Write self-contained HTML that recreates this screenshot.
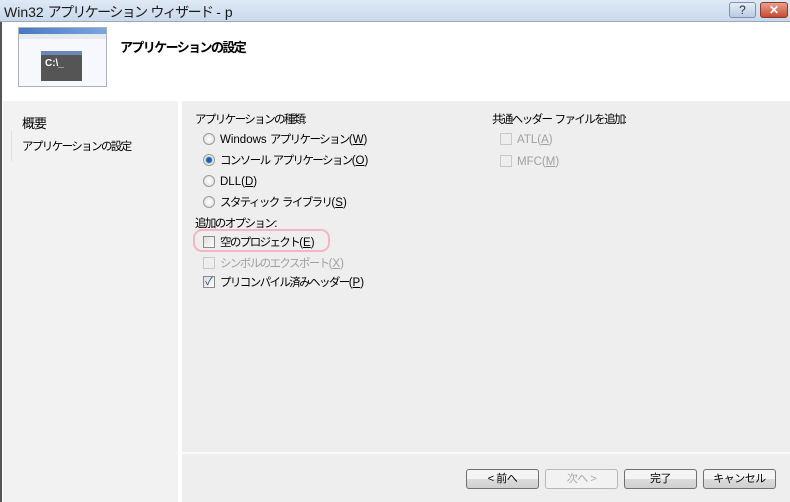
<!DOCTYPE html>
<html><head><meta charset="utf-8"><style>
*{margin:0;padding:0;box-sizing:border-box}
body{width:790px;height:502px;overflow:hidden;background:#fff;font-family:"Liberation Sans","Noto Sans CJK JP",sans-serif;font-size:12px;color:#000;position:relative}
.a{position:absolute}
.title{left:0;top:0;width:790px;height:22px;background:linear-gradient(#dfe9f5,#c9d9ec);border-bottom:1px solid #9aa8b8}
.title>span{position:absolute;left:4px;top:2px;font-size:14px;color:#1b1b1b;letter-spacing:-1.6px;white-space:nowrap}
.btn{border:1px solid #707070;border-radius:3px;background:linear-gradient(#f4f4f4 50%,#dcdcdc 50%,#d0d0d0);text-align:center;font-size:11px;line-height:18px;height:20px;letter-spacing:-0.5px}
.rad{width:12px;height:12px;border-radius:50%;border:1px solid #9a9a9a;background:radial-gradient(#fff,#dcdcdc)}
.chk{width:12px;height:12px;border:1px solid #8a8a8a;background:linear-gradient(135deg,#dcdcdc,#fff)}
.t{font-size:11.5px;white-space:nowrap;letter-spacing:-1.6px;line-height:17px;height:17px;margin-top:2px}
.l{letter-spacing:0}
.g{color:#a0a0a0}
</style></head><body>
<div class="a title"><span><span class="l">Win32 </span>アプリケーション<span class="l"> </span>ウィザード<span class="l"> - p</span></span></div>
<div class="a" style="left:729px;top:2px;width:27px;height:16px;border:1px solid #7f92aa;border-radius:3px;background:linear-gradient(#e4edf7,#b9cbe2);text-align:center;font-size:12px;line-height:14px;color:#333">?</div>
<div class="a" style="left:760px;top:2px;width:28px;height:16px;border:1px solid #8b3a2e;border-radius:3px;background:linear-gradient(#e8a08f,#c84a33);text-align:center;font-size:12px;font-weight:bold;line-height:14px;color:#fff">✕</div>
<div class="a" style="left:0;top:22px;width:2px;height:480px;background:#555"></div>
<div class="a" style="left:18px;top:27px;width:89px;height:60px;border:1px solid #a9b4c2;background:#f6f8fb">
 <div style="height:6px;background:linear-gradient(90deg,#4a78c0,#7aa6e0)"></div>
 <div style="height:5px;background:#e6e9ee"></div>
 <div style="position:absolute;left:22px;top:23px;width:41px;height:30px;background:#555;border-top:4px solid #6a88b8;color:#fff;font-weight:bold;font-size:10px;padding:3px 0 0 4px">C:\_</div>
</div>
<div class="a t" style="left:120px;top:37px;font-weight:bold;font-size:13px;letter-spacing:-1.6px">アプリケーションの設定</div>
<div class="a" style="left:3px;top:101px;width:175px;height:401px;background:#f2f2f2"></div>
<div class="a" style="left:11px;top:131px;width:1px;height:30px;background:#e0e0e0"></div>
<div class="a t" style="left:22px;top:113px;font-size:13px;letter-spacing:-1px">概要</div>
<div class="a t" style="left:22px;top:137px">アプリケーションの設定</div>
<div class="a" style="left:182px;top:101px;width:608px;height:401px;background:#eeeeee"></div>
<div class="a" style="left:182px;top:452px;width:608px;height:2px;background:#fafafa"></div>
<div class="a t" style="left:195px;top:110px">アプリケーションの種類<span class="l">:</span></div>
<div class="a rad" style="left:203px;top:133px"></div><div class="a t" style="left:220px;top:130px"><span class="l">Windows </span>アプリケーション<span class="l">(<u>W</u>)</span></div>
<div class="a rad" style="left:203px;top:154px;background:radial-gradient(#1a5fa8 30%,#7ab 45%,#eee 55%)"></div><div class="a t" style="left:220px;top:151px">コンソール<span class="l"> </span>アプリケーション<span class="l">(<u>O</u>)</span></div>
<div class="a rad" style="left:203px;top:175px"></div><div class="a t" style="left:220px;top:172px"><span class="l">DLL(<u>D</u>)</span></div>
<div class="a rad" style="left:203px;top:196px"></div><div class="a t" style="left:220px;top:193px">スタティック<span class="l"> </span>ライブラリ<span class="l">(<u>S</u>)</span></div>
<div class="a t" style="left:195px;top:214px">追加のオプション<span class="l">:</span></div>
<div class="a" style="left:193px;top:229px;width:137px;height:23px;border:2px solid #f4b6c2;border-radius:9px"></div>
<div class="a chk" style="left:203px;top:236px"></div><div class="a t" style="left:220px;top:233px">空のプロジェクト<span class="l">(<u>E</u>)</span></div>
<div class="a chk" style="left:203px;top:257px;border-color:#c8c8c8;background:#eee"></div><div class="a t g" style="left:220px;top:254px">シンボルのエクスポート<span class="l">(<u>X</u>)</span></div>
<div class="a chk" style="left:203px;top:276px;font-size:11px;line-height:10px;text-align:center;color:#1a4f90">✓</div><div class="a t" style="left:220px;top:273px">プリコンパイル済みヘッダー<span class="l">(<u>P</u>)</span></div>
<div class="a t" style="left:492px;top:110px">共通ヘッダー<span class="l"> </span>ファイルを追加<span class="l">:</span></div>
<div class="a chk" style="left:500px;top:133px;border-color:#c8c8c8;background:#eee"></div><div class="a t g" style="left:517px;top:130px"><span class="l">ATL(<u>A</u>)</span></div>
<div class="a chk" style="left:500px;top:155px;border-color:#c8c8c8;background:#eee"></div><div class="a t g" style="left:517px;top:152px"><span class="l">MFC(<u>M</u>)</span></div>
<div class="a btn" style="left:466px;top:469px;width:73px">&lt; 前へ</div>
<div class="a btn" style="left:545px;top:469px;width:73px;border-color:#b8b8b8;background:#f2f2f2;color:#a8a8a8">次へ &gt;</div>
<div class="a btn" style="left:624px;top:469px;width:73px">完了</div>
<div class="a btn" style="left:703px;top:469px;width:73px">キャンセル</div>
</body></html>
